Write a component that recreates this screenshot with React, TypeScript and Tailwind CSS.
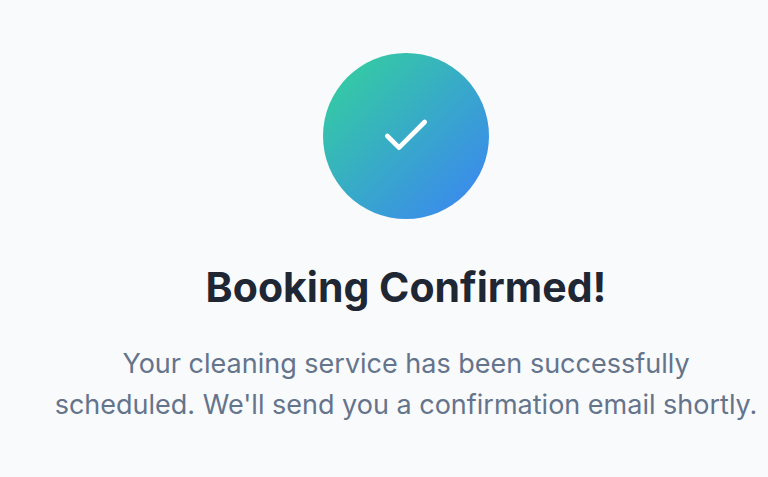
import { Check } from "lucide-react"

export default function BookingConfirmed() {
    return (
        <main className="flex min-h-screen flex-col items-center bg-[#f9fafc] pt-[53px] pb-12 pl-11 text-center font-['Inter',sans-serif]">
            <div className="flex size-[166px] items-center justify-center rounded-full bg-linear-to-br/srgb from-[#34d399] to-[#3b82f6]">
                <Check className="size-[56px] text-white" strokeWidth={2} aria-hidden="true" />
            </div>
            <h1 className="mt-11 text-[41px] leading-12 font-bold text-[#1e2733]">
                Booking Confirmed!
            </h1>
            <p className="mt-8 max-w-[710px] text-[27px] leading-[41px] text-[#64748b]">
                Your cleaning service has been successfully scheduled. We'll send you a confirmation email shortly.
            </p>
        </main>
    )
}
